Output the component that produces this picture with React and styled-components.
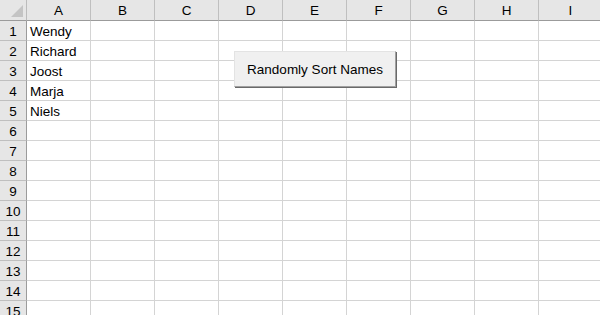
import styled, { createGlobalStyle } from 'styled-components'

const GlobalStyle = createGlobalStyle`
  html, body {
    margin: 0;
    padding: 0;
    background: #ffffff;
    overflow: hidden;
  }
  body {
    font-family: "Liberation Sans", Arial, sans-serif;
  }
`

const columns = ['A', 'B', 'C', 'D', 'E', 'F', 'G', 'H', 'I']
const names = ['Wendy', 'Richard', 'Joost', 'Marja', 'Niels']
const rowCount = 15

const Sheet = styled.div`
  position: relative;
  width: 600px;
  height: 315px;
  overflow: hidden;
`

const Grid = styled.div`
  display: grid;
  grid-template-columns: 27px repeat(9, 64px);
  grid-auto-rows: 20px;
  grid-template-rows: 21px;
  font-size: 13.5px;
  color: #000;
`

const Corner = styled.div`
  position: relative;
  background: #e6e6e6;
  border-right: 1px solid #bcbcbc;
  border-bottom: 1px solid #9b9b9b;
  box-sizing: border-box;

  svg {
    position: absolute;
    right: 3px;
    bottom: 3px;
  }
`

const ColHeader = styled.div`
  display: flex;
  align-items: center;
  justify-content: center;
  padding-top: 1px;
  background: #e6e6e6;
  border-right: 1px solid #bfbfbf;
  border-bottom: 1px solid #9b9b9b;
  box-sizing: border-box;
`

const RowHeader = styled.div`
  display: flex;
  align-items: flex-end;
  justify-content: center;
  padding-bottom: 1px;
  background: #e6e6e6;
  border-right: 1px solid #9b9b9b;
  border-bottom: 1px solid #bfbfbf;
  box-sizing: border-box;
`

const Cell = styled.div`
  display: flex;
  align-items: flex-end;
  padding: 0 0 1px 3px;
  border-right: 1px solid #d4d4d4;
  border-bottom: 1px solid #d4d4d4;
  box-sizing: border-box;
  white-space: nowrap;
`

const SortButton = styled.button`
  position: absolute;
  left: 234px;
  top: 51px;
  width: 162px;
  height: 36px;
  padding: 0;
  background: #f0f0f0;
  border-top: 1px solid #e3e3e3;
  border-left: 1px solid #e3e3e3;
  border-right: 1px solid #a0a0a0;
  border-bottom: 1px solid #a0a0a0;
  box-shadow: 1px 1px 0 #696969;
  font-family: "Liberation Sans", Arial, sans-serif;
  font-size: 13.5px;
  color: #000;
  box-sizing: border-box;
`

export default function App() {
  return (
    <Sheet>
      <GlobalStyle />
      <Grid>
        <Corner>
          <svg width="12" height="12" viewBox="0 0 12 12">
            <polygon points="12,0 12,12 0,12" fill="#c4c4c4" />
          </svg>
        </Corner>
        {columns.map((c) => (
          <ColHeader key={c}>{c}</ColHeader>
        ))}
        {Array.from({ length: rowCount }, (_, r) => (
          <Row key={r} index={r + 1} name={names[r]} />
        ))}
      </Grid>
      <SortButton>Randomly Sort Names</SortButton>
    </Sheet>
  )
}

function Row({ index, name }) {
  return (
    <>
      <RowHeader>{index}</RowHeader>
      {columns.map((c, i) => (
        <Cell key={c}>{i === 0 && name ? name : ''}</Cell>
      ))}
    </>
  )
}
